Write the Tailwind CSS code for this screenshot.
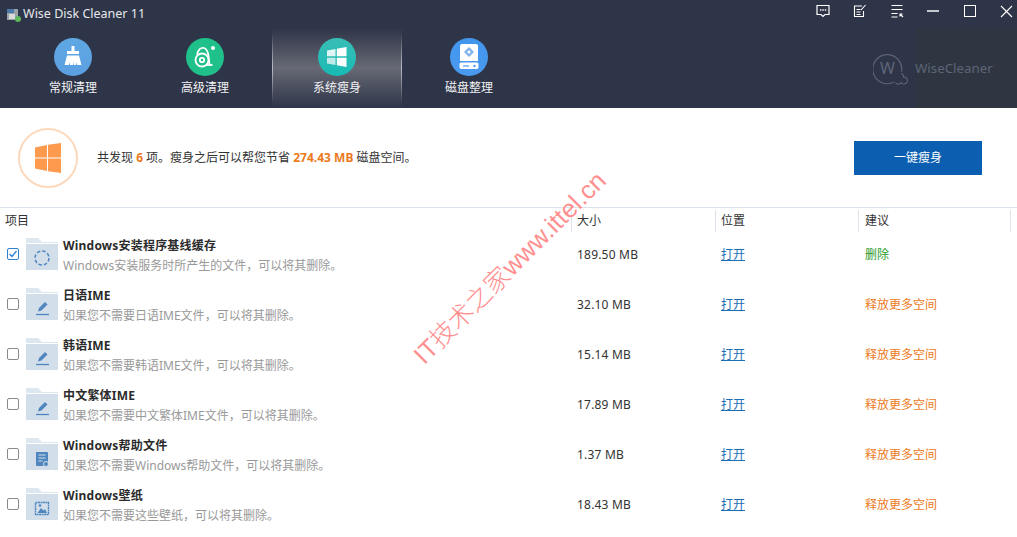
<!DOCTYPE html>
<html lang="zh-CN">
<head>
  <meta charset="UTF-8" />
  <title>Wise Disk Cleaner 11</title>
  <script src="https://cdn.jsdelivr.net/npm/@tailwindcss/browser@4"></script>
</head>
<body class="relative w-[1017px] h-[537px] overflow-hidden bg-white font-['Noto_Sans','Noto_Sans_CJK_SC',sans-serif] text-[12px] text-[#333]">

  <!-- header -->
  <header class="h-[108px] bg-[#2f3548] text-white flex flex-col">
    <div class="h-[28px] flex items-center justify-between">
      <div class="flex items-center pl-[6px] gap-[2px]">
        <svg class="block" width="15" height="15" viewBox="0 0 15 15"><rect x="1" y="2" width="11" height="11" fill="#9aa3a8"/><rect x="1" y="2" width="7" height="4" fill="#4d79a8"/><rect x="3" y="7" width="6" height="5" fill="#d8dadb"/><circle cx="12" cy="12" r="3" fill="#5fb85a"/></svg>
        <span class="text-[12.5px] text-[#e6e8ec]">Wise Disk Cleaner 11</span>
      </div>
      <div class="flex items-center mr-[-8px] mt-[-6px]">
        <div class="w-[37px] flex justify-center">
          <svg class="block" width="14" height="14" viewBox="0 0 14 14" fill="none" stroke="#fff" stroke-width="1.2"><path d="M1 1.500h12v9H9l-2 2-2-2H1z"/><path d="M4 6h1.400M6.400 6h1.400M8.800 6h1.400" stroke-width="1.600"/></svg>
        </div>
        <div class="w-[37px] flex justify-center">
          <svg class="block" width="14" height="14" viewBox="0 0 14 14" fill="none" stroke="#fff" stroke-width="1.1"><path d="M9 2H1.500v10.500h9V7"/><path d="M3.500 5.500h4M3.500 8h4M3.500 10.500h4"/><path d="M8 6l4.500-5"/></svg>
        </div>
        <div class="w-[37px] flex justify-center">
          <svg class="block" width="14" height="14" viewBox="0 0 14 14" fill="none" stroke="#fff" stroke-width="1.1"><path d="M1.500 1.500h11M1.500 5.500h11M1.500 9.500h6M1.500 13h6"/><path d="M13 13L10 10M10 12.500V10h2.500"/></svg>
        </div>
        <div class="w-[36px] flex justify-center">
          <div class="w-[12px] h-[2px] bg-[#c5c8ce]"></div>
        </div>
        <div class="w-[37px] flex justify-center">
          <div class="w-[12px] h-[12px] border border-white"></div>
        </div>
        <div class="w-[37px] flex justify-center">
          <svg class="block" width="13" height="13" viewBox="0 0 13 13" fill="none" stroke="#fff" stroke-width="1.1"><path d="M1 1l11 11M12 1L1 12"/></svg>
        </div>
      </div>
    </div>

    <div class="flex-1 flex justify-between">
      <nav class="flex pl-[7px]">
        <a class="w-[132px] flex flex-col items-center pt-[10px]">
          <span class="w-[38px] h-[38px] rounded-full bg-gradient-to-b from-[#5fa8e4] to-[#5b9fe0] flex items-center justify-center">
            <svg class="block" width="22" height="24" viewBox="0 0 22 24" fill="#fff"><path d="M9.500 1h3v5H17v3H5V6h4.500z"/><path d="M5 10.500h12l2.500 9.500H15l-.5-3-.5 3H11.700v-3.500L11 20H8l-.3-3-.7 3H2.500z"/></svg>
          </span>
          <span class="mt-[3px] leading-[18px] text-[#f1f2f4]">常规清理</span>
        </a>
        <a class="w-[132px] flex flex-col items-center pt-[10px]">
          <span class="w-[38px] h-[38px] rounded-full bg-[#1fc08a] flex items-center justify-center">
            <svg class="block" width="24" height="26" viewBox="0 0 24 26" fill="none" stroke="#fff" stroke-width="1.8"><circle cx="9" cy="16" r="6.500"/><circle cx="9" cy="16" r="2.200"/><path d="M4 10.500C5 6 8 3 11 4c3 1 4 4 4.500 8l1 8.500"/><path d="M13 21h6.500"/><circle cx="20" cy="4" r="2" fill="#fff" stroke="none"/></svg>
          </span>
          <span class="mt-[3px] leading-[18px] text-[#f1f2f4]">高级清理</span>
        </a>
        <a class="relative w-[130px] mx-[1px] flex flex-col items-center pt-[10px] bg-gradient-to-b from-[#2f3548] via-[#676a75] to-[#2f3548]">
          <span class="absolute left-0 top-[6px] bottom-[6px] w-[1px] bg-gradient-to-b from-transparent via-[#b9bcc4] to-transparent"></span>
          <span class="absolute right-0 top-[6px] bottom-[6px] w-[1px] bg-gradient-to-b from-transparent via-[#b9bcc4] to-transparent"></span>
          <span class="w-[38px] h-[38px] rounded-full bg-gradient-to-b from-[#37bdb6] to-[#14bbb4] flex items-center justify-center">
            <svg class="block" width="20" height="20" viewBox="0 0 20 20" fill="#fff"><path d="M0 3.500L8.500 2v7.300H0z" opacity=".85"/><path d="M9.800 1.800L19.500 0v9.300H9.800z"/><path d="M0 10.700h8.500V18L0 16.500z" opacity=".7"/><path d="M9.800 10.700h9.700V20l-9.700-1.800z"/></svg>
          </span>
          <span class="mt-[3px] leading-[18px] text-[#f1f2f4]">系统瘦身</span>
        </a>
        <a class="w-[132px] flex flex-col items-center pt-[10px]">
          <span class="w-[38px] h-[38px] rounded-full bg-gradient-to-b from-[#4196ec] to-[#4a9af0] flex items-center justify-center">
            <svg class="block" width="20" height="26" viewBox="0 0 20 26"><path d="M3 0h14a2 2 0 0 1 2 2v15H1V2a2 2 0 0 1 2-2z" fill="#fff"/><path d="M10 3l5 5-5 5-5-5z" fill="#7fb4ec"/><circle cx="10" cy="8" r="1.500" fill="#fff"/><path d="M2 18.500h16a1.500 1.500 0 0 1 1.500 1.500v3.500A2 2 0 0 1 17.500 25h-15A2 2 0 0 1 .5 23.500V20A1.500 1.500 0 0 1 2 18.500z" fill="#fff"/><path d="M4 22h6" stroke="#4a9af0" stroke-width="1.2"/><circle cx="15.500" cy="22" r="1.200" fill="#4a9af0"/></svg>
          </span>
          <span class="mt-[3px] leading-[18px] text-[#f1f2f4]">磁盘整理</span>
        </a>
      </nav>
      <div class="w-[144px] flex items-start pt-[25px] gap-[4px] bg-gradient-to-r from-[#2f3548] from-30% to-[#2f3641] to-30%">
        <div class="relative w-[38px] h-[32px] shrink-0">
          <svg class="block" width="38" height="32" viewBox="0 0 38 32" fill="none" stroke="#5d6577" stroke-width="1.1"><path d="M28.500 19A14.500 14.500 0 1 0 21 29"/><path d="M28 20.500a3.500 3.500 0 0 1 2.500 3.500h.5a3.500 3.500 0 1 1-3 5.500 3 3 0 0 1-5.500 0"/></svg>
          <span class="absolute left-[7px] top-[5px] text-[16px] leading-[20px] text-[#5d6577]">W</span>
        </div>
        <span class="text-[13.3px] text-[#5d6577] leading-[18px] mt-[6px]">WiseCleaner</span>
      </div>
    </div>
  </header>

  <!-- summary -->
  <section class="h-[100px] flex items-center justify-between border-b border-[#dde3ea] pl-[18px] pr-[35px]">
    <div class="flex items-center">
      <div class="w-[60px] h-[60px] rounded-full border-2 border-[#fcd9bd] flex items-center justify-center">
        <svg class="block" width="26" height="30" viewBox="0 0 26 30" fill="#fd9a4e"><path d="M0 4.500L12 2v12.500H0z"/><path d="M13 1.800L26 0v14.500H13z"/><path d="M0 15.500h12V28L0 25.500z"/><path d="M13 15.500h13V30l-13-1.800z"/></svg>
      </div>
      <p class="ml-[19px]">共发现 <b class="text-[#ec7a1c]">6</b> 项。瘦身之后可以帮您节省 <b class="text-[#ec7a1c]">274.43 MB</b> 磁盘空间。</p>
    </div>
    <button class="w-[128px] h-[34px] bg-[#0c5fb0] text-white text-[12px]">一键瘦身</button>
  </section>

  <!-- list -->
  <div class="grid grid-cols-[572px_144px_143px_152px] h-[26px] items-center">
    <div class="pl-[5px] border-r border-[#dde3ea] h-[22px] leading-[22px]">项目</div>
    <div class="pl-[5px] border-r border-[#dde3ea] h-[22px] leading-[22px]">大小</div>
    <div class="pl-[5px] border-r border-[#dde3ea] h-[22px] leading-[22px]">位置</div>
    <div class="pl-[6px] border-r border-[#dde3ea] h-[22px] leading-[22px]">建议</div>
  </div>

  <div class="mt-[-4px]">
    <div class="h-[50px] grid grid-cols-[572px_144px_143px_152px] items-center">
      <div class="flex items-center">
        <span class="ml-[7px] mb-[2px] w-[12px] h-[12px] rounded-[2px] border border-[#2f7fd3] flex items-center justify-center">
          <svg class="block" width="10" height="10" viewBox="0 0 10 10" fill="none" stroke="#2f7fd3" stroke-width="1.3"><path d="M1.500 5l2.500 2.500L8.500 2"/></svg>
        </span>
        <span class="ml-[7px] mb-[2px]">
          <svg class="block" width="32" height="32" viewBox="0 0 32 32"><path d="M0 0h12l4 4h16v1H0z" fill="#dde7f0"/><path d="M0 6h32v26H0z" fill="#d2dfeb"/><circle cx="16" cy="20" r="7" fill="none" stroke="#4f86bd" stroke-width="1.5" stroke-dasharray="3.500 2"/></svg>
        </span>
        <div class="ml-[5px] pt-[1px]">
          <div class="font-bold leading-[20px] text-[#2b2b2b] tracking-[0.2px]">Windows安装程序基线缓存</div>
          <div class="leading-[19px] text-[#999]">Windows安装服务时所产生的文件，可以将其删除。</div>
        </div>
      </div>
      <div class="pl-[5px] tracking-[0.2px]">189.50 MB</div>
      <div class="pl-[5px]"><a class="text-[#1a6fb5] underline">打开</a></div>
      <div class="pl-[6px] text-[#2a9a2a]">删除</div>
    </div>

    <div class="h-[50px] grid grid-cols-[572px_144px_143px_152px] items-center">
      <div class="flex items-center">
        <span class="ml-[7px] mb-[2px] w-[12px] h-[12px] rounded-[2px] border border-[#8a8a8a]"></span>
        <span class="ml-[7px] mb-[2px]">
          <svg class="block" width="32" height="32" viewBox="0 0 32 32"><path d="M0 0h12l4 4h16v1H0z" fill="#dde7f0"/><path d="M0 6h32v26H0z" fill="#d2dfeb"/><path d="M10 26.500h13" stroke="#4f86bd" stroke-width="1.3"/><path d="M12 23.500l1-3.500 6-6 2.500 2.500-6 6z" fill="#4f86bd"/></svg>
        </span>
        <div class="ml-[5px] pt-[1px]">
          <div class="font-bold leading-[20px] text-[#2b2b2b] tracking-[0.2px]">日语IME</div>
          <div class="leading-[19px] text-[#999]">如果您不需要日语IME文件，可以将其删除。</div>
        </div>
      </div>
      <div class="pl-[5px] tracking-[0.2px]">32.10 MB</div>
      <div class="pl-[5px]"><a class="text-[#1a6fb5] underline">打开</a></div>
      <div class="pl-[6px] text-[#ec7a1c]">释放更多空间</div>
    </div>

    <div class="h-[50px] grid grid-cols-[572px_144px_143px_152px] items-center">
      <div class="flex items-center">
        <span class="ml-[7px] mb-[2px] w-[12px] h-[12px] rounded-[2px] border border-[#8a8a8a]"></span>
        <span class="ml-[7px] mb-[2px]">
          <svg class="block" width="32" height="32" viewBox="0 0 32 32"><path d="M0 0h12l4 4h16v1H0z" fill="#dde7f0"/><path d="M0 6h32v26H0z" fill="#d2dfeb"/><path d="M10 26.500h13" stroke="#4f86bd" stroke-width="1.3"/><path d="M12 23.500l1-3.500 6-6 2.500 2.500-6 6z" fill="#4f86bd"/></svg>
        </span>
        <div class="ml-[5px] pt-[1px]">
          <div class="font-bold leading-[20px] text-[#2b2b2b] tracking-[0.2px]">韩语IME</div>
          <div class="leading-[19px] text-[#999]">如果您不需要韩语IME文件，可以将其删除。</div>
        </div>
      </div>
      <div class="pl-[5px] tracking-[0.2px]">15.14 MB</div>
      <div class="pl-[5px]"><a class="text-[#1a6fb5] underline">打开</a></div>
      <div class="pl-[6px] text-[#ec7a1c]">释放更多空间</div>
    </div>

    <div class="h-[50px] grid grid-cols-[572px_144px_143px_152px] items-center">
      <div class="flex items-center">
        <span class="ml-[7px] mb-[2px] w-[12px] h-[12px] rounded-[2px] border border-[#8a8a8a]"></span>
        <span class="ml-[7px] mb-[2px]">
          <svg class="block" width="32" height="32" viewBox="0 0 32 32"><path d="M0 0h12l4 4h16v1H0z" fill="#dde7f0"/><path d="M0 6h32v26H0z" fill="#d2dfeb"/><path d="M10 26.500h13" stroke="#4f86bd" stroke-width="1.3"/><path d="M12 23.500l1-3.500 6-6 2.500 2.500-6 6z" fill="#4f86bd"/></svg>
        </span>
        <div class="ml-[5px] pt-[1px]">
          <div class="font-bold leading-[20px] text-[#2b2b2b] tracking-[0.2px]">中文繁体IME</div>
          <div class="leading-[19px] text-[#999]">如果您不需要中文繁体IME文件，可以将其删除。</div>
        </div>
      </div>
      <div class="pl-[5px] tracking-[0.2px]">17.89 MB</div>
      <div class="pl-[5px]"><a class="text-[#1a6fb5] underline">打开</a></div>
      <div class="pl-[6px] text-[#ec7a1c]">释放更多空间</div>
    </div>

    <div class="h-[50px] grid grid-cols-[572px_144px_143px_152px] items-center">
      <div class="flex items-center">
        <span class="ml-[7px] mb-[2px] w-[12px] h-[12px] rounded-[2px] border border-[#8a8a8a]"></span>
        <span class="ml-[7px] mb-[2px]">
          <svg class="block" width="32" height="32" viewBox="0 0 32 32"><path d="M0 0h12l4 4h16v1H0z" fill="#dde7f0"/><path d="M0 6h32v26H0z" fill="#d2dfeb"/><path d="M10 14h11a1 1 0 0 1 1 1v13H11a1 1 0 0 1-1-1z" fill="#4f86bd"/><path d="M12.500 17h7M12.500 20h7M12.500 23h4" stroke="#d2dfeb"/><circle cx="20" cy="26" r="2.500" fill="#4f86bd" stroke="#d2dfeb"/></svg>
        </span>
        <div class="ml-[5px] pt-[1px]">
          <div class="font-bold leading-[20px] text-[#2b2b2b] tracking-[0.2px]">Windows帮助文件</div>
          <div class="leading-[19px] text-[#999]">如果您不需要Windows帮助文件，可以将其删除。</div>
        </div>
      </div>
      <div class="pl-[5px] tracking-[0.2px]">1.37 MB</div>
      <div class="pl-[5px]"><a class="text-[#1a6fb5] underline">打开</a></div>
      <div class="pl-[6px] text-[#ec7a1c]">释放更多空间</div>
    </div>

    <div class="h-[50px] grid grid-cols-[572px_144px_143px_152px] items-center">
      <div class="flex items-center">
        <span class="ml-[7px] mb-[2px] w-[12px] h-[12px] rounded-[2px] border border-[#8a8a8a]"></span>
        <span class="ml-[7px] mb-[2px]">
          <svg class="block" width="32" height="32" viewBox="0 0 32 32"><path d="M0 0h12l4 4h16v1H0z" fill="#dde7f0"/><path d="M0 6h32v26H0z" fill="#d2dfeb"/><rect x="9.500" y="14.500" width="13" height="12" fill="none" stroke="#4f86bd" stroke-width="1.4" stroke-dasharray="2 .5"/><path d="M11.500 25l3.500-5 2.500 2.500 1.500-1.500 2 4z" fill="#4f86bd"/><circle cx="14" cy="17.500" r="1.300" fill="#4f86bd"/></svg>
        </span>
        <div class="ml-[5px] pt-[1px]">
          <div class="font-bold leading-[20px] text-[#2b2b2b] tracking-[0.2px]">Windows壁纸</div>
          <div class="leading-[19px] text-[#999]">如果您不需要这些壁纸，可以将其删除。</div>
        </div>
      </div>
      <div class="pl-[5px] tracking-[0.2px]">18.43 MB</div>
      <div class="pl-[5px]"><a class="text-[#1a6fb5] underline">打开</a></div>
      <div class="pl-[6px] text-[#ec7a1c]">释放更多空间</div>
    </div>
  </div>

  <!-- watermark -->
  <div class="absolute left-[510px] top-[268px] -translate-x-1/2 -translate-y-1/2 -rotate-45 whitespace-nowrap font-['Liberation_Sans','Noto_Sans_CJK_SC',sans-serif] font-light text-[25.5px] leading-none text-[#ff8f8f] pointer-events-none">IT技术之家www.ittel.cn</div>
</body>
</html>
